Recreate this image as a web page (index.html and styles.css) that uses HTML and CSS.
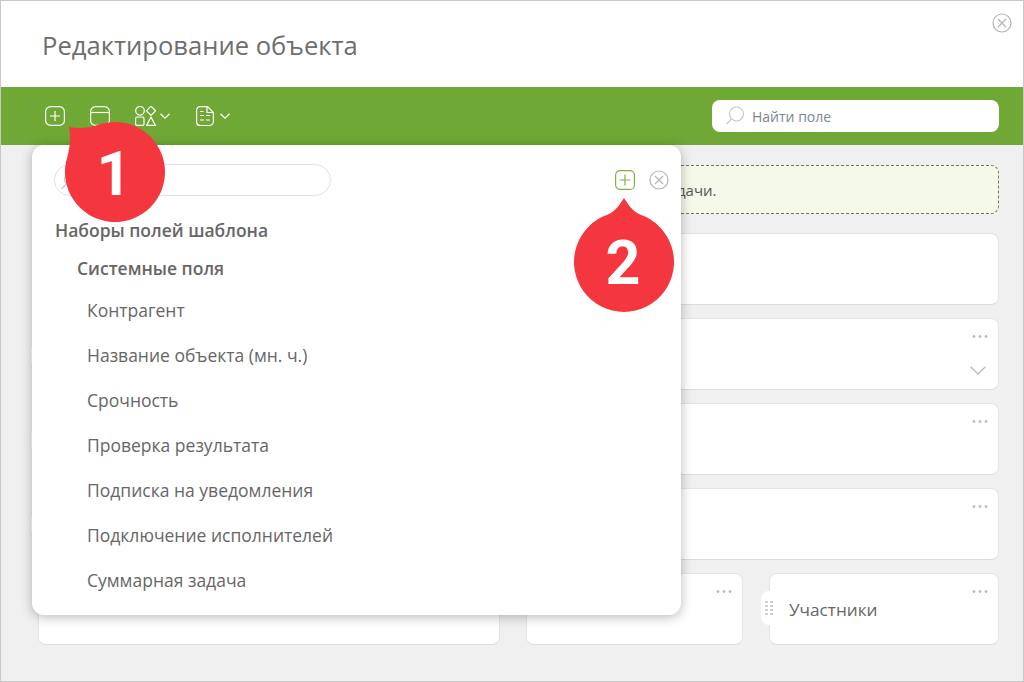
FILE: index.html
```html
<!DOCTYPE html>
<html lang="ru">
<head>
<meta charset="utf-8">
<title>Редактирование объекта</title>
<link rel="stylesheet" href="styles.css">
</head>
<body>
<div class="window">
  <header class="head">
    <h1 class="title">Редактирование объекта</h1>
    <svg class="close-main" width="20" height="20" viewBox="0 0 20 20"><circle cx="10" cy="10" r="9" fill="none" stroke="#b5b5b5" stroke-width="1.2"/><path d="M6 6l8 8M14 6l-8 8" stroke="#b5b5b5" stroke-width="1.2"/></svg>
  </header>
  <nav class="toolbar">
    <div class="tools">
      <svg class="tool" width="20" height="20" viewBox="0 0 20 20" fill="none" stroke="#fff" stroke-width="1.2"><rect x=".6" y=".6" width="18.8" height="18.800" rx="5"/><path d="M10 5v10M5 10h10"/></svg>
      <svg class="tool" width="20" height="20" viewBox="0 0 20 20" fill="none" stroke="#fff" stroke-width="1.2"><rect x=".6" y=".6" width="18.8" height="18.800" rx="5"/><path d="M1 6.500h18"/></svg>
      <span class="tool-group">
        <svg width="21" height="20" viewBox="0 0 21 20" fill="none" stroke="#fff" stroke-width="1.200"><circle cx="5" cy="4.800" r="4.300"/><path d="M16 .2l4.600 4.600-4.600 4.600-4.600-4.600z" stroke-linejoin="round"/><rect x=".6" y="11" width="8.400" height="8.400" rx="1.500"/><path d="M16 11l4.400 8.400h-8.800z" stroke-linejoin="round"/></svg>
        <svg width="10" height="6" viewBox="0 0 10 6" fill="none" stroke="#fff" stroke-width="1.200"><path d="M.5.800l4.500 4.400L9.500.8"/></svg>
      </span>
      <span class="tool-group tool-group-doc">
        <svg width="18" height="20" viewBox="0 0 18 20" fill="none" stroke="#fff" stroke-width="1.200"><path d="M4 .6h7.500l5.900 5.900v9a4 4 0 0 1-4 4H4a3.400 3.400 0 0 1-3.400-3.400V4A3.400 3.400 0 0 1 4 .6z"/><path d="M11 1v5.500h6M4 5.500h3.500M4 9.500h4M10 9.500h4M4 14h4M10 14h4"/></svg>
        <svg width="10" height="6" viewBox="0 0 10 6" fill="none" stroke="#fff" stroke-width="1.200"><path d="M.5.800l4.500 4.400L9.500.8"/></svg>
      </span>
    </div>
    <div class="find">
      <svg width="20" height="20" viewBox="0 0 20 20" fill="none" stroke="#c4c4c4" stroke-width="1.100"><circle cx="11.500" cy="8" r="7"/><path d="M6.500 13l-5 5"/></svg>
      <span>Найти поле</span>
    </div>
  </nav>
  <main class="content">
    <div class="notice">дачи.</div>
    <div class="card"></div>
    <div class="card"><i class="handle"></i><i class="dots"></i><svg class="chev" width="16" height="9" viewBox="0 0 16 9" fill="none" stroke="#bdbdbd" stroke-width="1.400"><path d="M.6.800L8 8 15.400.8"/></svg></div>
    <div class="card"><i class="handle"></i><i class="dots"></i></div>
    <div class="card"><i class="handle"></i><i class="dots"></i></div>
    <div class="row">
      <div class="card card-a"></div>
      <div class="card card-b"><i class="dots"></i></div>
      <div class="card card-c">
        <i class="grip"></i>
        <span class="card-label">Участники</span>
        <i class="dots"></i>
      </div>
    </div>
  </main>

  <section class="popover">
    <div class="pop-top">
      <div class="pop-search">
        <svg width="20" height="20" viewBox="0 0 20 20" fill="none" stroke="#c4c4c4" stroke-width="1.100"><circle cx="11.500" cy="8" r="7"/><path d="M6.500 13l-5 5"/></svg>
      </div>
      <div class="pop-actions">
        <svg width="20" height="20" viewBox="0 0 20 20" fill="none" stroke="#7cb342" stroke-width="1.200"><rect x=".6" y=".6" width="18.800" height="18.800" rx="4.500"/><path d="M10 4.500v11M4.500 10h11"/></svg>
        <svg width="20" height="20" viewBox="0 0 20 20" fill="none" stroke="#b5b5b5" stroke-width="1.200"><circle cx="10" cy="10" r="9"/><path d="M6 6l8 8M14 6l-8 8"/></svg>
      </div>
    </div>
    <h2 class="pop-h">Наборы полей шаблона</h2>
    <h3 class="pop-sub">Системные поля</h3>
    <ul class="pop-list">
      <li>Контрагент</li>
      <li>Название объекта (мн. ч.)</li>
      <li>Срочность</li>
      <li>Проверка результата</li>
      <li>Подписка на уведомления</li>
      <li>Подключение исполнителей</li>
      <li>Суммарная задача</li>
    </ul>
  </section>

  <div class="badge badge-1">
    <svg width="100" height="100" viewBox="0 0 100 100"><path fill="#f4363f" d="M4 5C14 7 25 6 35 2.300A50 50 0 1 1 2.400 34.700C5 25 6 14 4 5Z"/></svg>
    <span>1</span>
  </div>
  <div class="badge badge-2">
    <svg width="100" height="114" viewBox="0 0 100 114"><path fill="#f4363f" d="M50 0C54 6 58 13 66 16.600A50 50 0 1 1 34 16.600C42 13 46 6 50 0Z"/></svg>
    <span>2</span>
  </div>
</div>
</body>
</html>
```

FILE: styles.css
```css
* { box-sizing: border-box; }
html, body { margin: 0; padding: 0; }
body { width: 1024px; height: 682px; overflow: hidden; font-family: "Open Sans", "Liberation Sans", sans-serif; color: #555; }
.window { position: relative; width: 1024px; height: 682px; border: 1px solid #c8c8c8; background: #f0f0f0; display: flex; flex-direction: column; }
.head { position: relative; height: 86px; background: #fff; padding: 27px 0 0 41px; flex: none; }
.title { margin: 0; font-size: 25.6px; line-height: 36px; font-weight: 400; color: #6e6e6e; }
.close-main { position: absolute; right: 11px; top: 12px; }
.toolbar { height: 58px; flex: none; background: #6fa835; display: flex; align-items: flex-start; justify-content: space-between; padding: 13px 24px 0 44px; }
.tools { display: flex; align-items: center; gap: 25px; height: 20px; margin-top: 6px; }
.tool { display: block; }
.tool-group { display: flex; align-items: center; gap: 4px; }
.tool-group svg { display: block; }
.tool-group-doc { margin-left: 1px; gap: 6px; }
.find { width: 287px; height: 32px; background: #fff; border-radius: 8px; display: flex; align-items: center; gap: 7px; padding-left: 13px; font-size: 14px; color: #7d8590; }
.content { flex: 1; padding: 20px 24px 0 37px; display: flex; flex-direction: column; gap: 13px; }
.notice { height: 49px; background: #f5f9e9; border: 1px dashed #6d7a55; border-radius: 8px; margin-bottom: 6px; padding: 13px 0 0 638px; font-size: 15px; line-height: 22px; color: #555; }
.card { position: relative; height: 72px; background: #fff; border: 1px solid #e4e4e4; border-bottom-color: #dcdcdc; border-radius: 8px; flex: none; }
.row { display: flex; gap: 26px; }
.card-a { width: 462px; }
.card-b { width: 217px; }
.card-c { flex: 1; }
.dots { position: absolute; right: 9px; top: 16px; width: 18px; height: 3px; background: radial-gradient(circle, #c4c4c4 1.300px, transparent 1.700px) 0 0 / 6px 3px repeat-x; }
.chev { position: absolute; right: 12px; top: 47px; }
.handle { position: absolute; left: -9px; top: 21px; width: 16px; height: 29px; border-radius: 8px; background: #fff; border: 1px solid #ececec; }
.grip { position: absolute; left: -9px; top: 17px; width: 16px; height: 34px; border-radius: 8px; background: #fff; }
.grip::before { content: ""; position: absolute; left: 4px; top: 10px; width: 8px; height: 15px; background: linear-gradient(#cfcfcf 2.500px, transparent 2.500px) 0 0 / 8px 4px; -webkit-mask: linear-gradient(90deg, #000 3px, transparent 3px, transparent 5px, #000 5px); mask: linear-gradient(90deg, #000 3px, transparent 3px, transparent 5px, #000 5px); }
.card-label { position: absolute; left: 19px; top: 23px; font-size: 17.2px; line-height: 26px; color: #666; }
.popover { position: absolute; left: 31px; top: 144px; width: 649px; height: 470px; background: #fff; border-radius: 12px; box-shadow: 0 2px 12px rgba(0,0,0,.28); padding: 19px 12px 0 22px; }
.pop-top { display: flex; justify-content: space-between; align-items: center; height: 32px; }
.pop-search { width: 277px; height: 32px; border: 1px solid #e2e2e2; border-radius: 16px; padding: 6px 0 0 5px; }
.pop-actions { display: flex; gap: 14px; }
.pop-h { margin: 22px 0 0 1px; font-size: 17.5px; line-height: 24px; font-weight: 600; color: #666; }
.pop-sub { margin: 14px 0 0 23px; font-size: 17.5px; line-height: 24px; font-weight: 600; color: #666; }
.pop-list { list-style: none; margin: 8px 0 0 33px; padding: 0; }
.pop-list li { height: 45px; font-size: 17.5px; line-height: 45px; color: #666; }
.badge { position: absolute; color: #fff; }
.badge svg { display: block; }
.badge span { position: absolute; font-family: Roboto, "Open Sans", sans-serif; font-size: 61px; line-height: 60px; font-weight: 700; width: 100%; text-align: center; }
.badge-1 { left: 64px; top: 121px; width: 100px; height: 100px; }
.badge-1 span { left: -1px; top: 22px; }
.badge-2 { left: 573px; top: 197px; width: 100px; height: 114px; }
.badge-2 span { left: -1px; top: 35px; }
```
